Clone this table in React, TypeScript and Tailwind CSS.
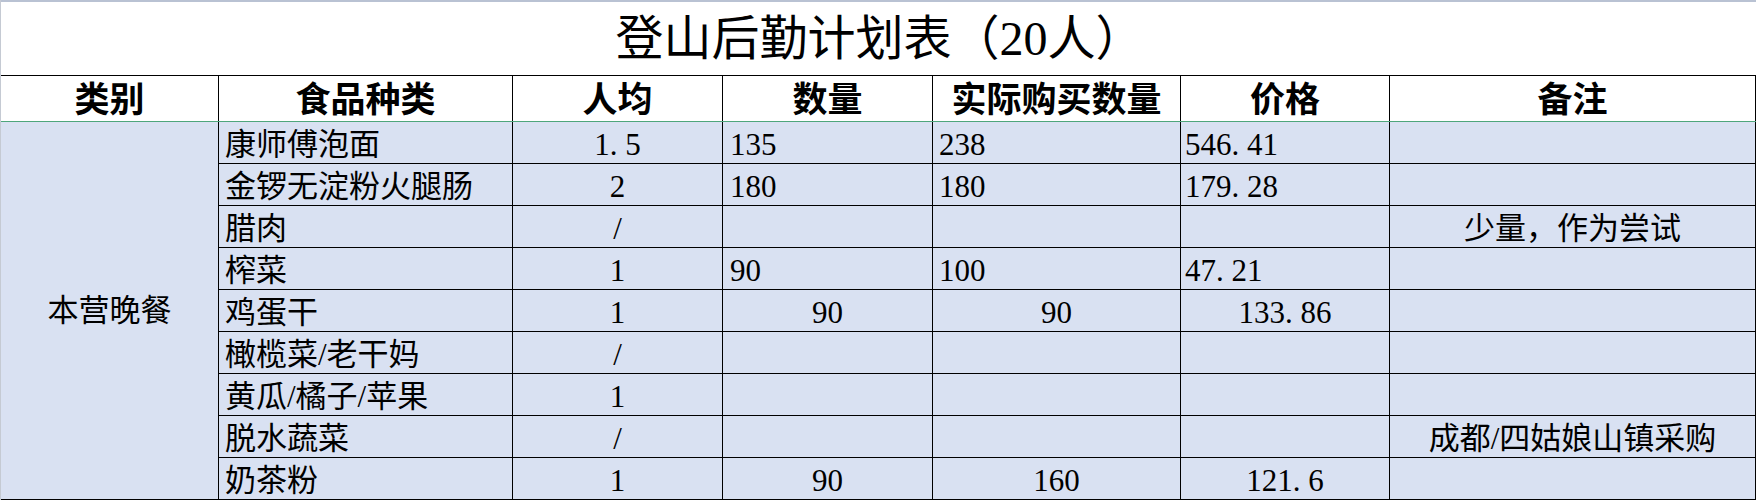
import React from "react";

type Row = {
  name: string;
  per: string;
  qty?: string;
  act?: string;
  price?: string;
  note?: string;
  center?: boolean;
};

const rows: Row[] = [
  { name: "康师傅泡面", per: "1.5", qty: "135", act: "238", price: "546.41" },
  { name: "金锣无淀粉火腿肠", per: "2", qty: "180", act: "180", price: "179.28" },
  { name: "腊肉", per: "/", note: "少量，作为尝试" },
  { name: "榨菜", per: "1", qty: "90", act: "100", price: "47.21" },
  { name: "鸡蛋干", per: "1", qty: "90", act: "90", price: "133.86", center: true },
  { name: "橄榄菜/老干妈", per: "/" },
  { name: "黄瓜/橘子/苹果", per: "1" },
  { name: "脱水蔬菜", per: "/", note: "成都/四姑娘山镇采购" },
  { name: "奶茶粉", per: "1", qty: "90", act: "160", price: "121.6", center: true },
];

function Num({ v }: { v?: string }) {
  if (!v) return null;
  const parts = v.split(".");
  return (
    <span>
      {parts[0]}
      {parts.length > 1 && (
        <>
          <span className="inline-block w-[0.5em]">.</span>
          {parts[1]}
        </>
      )}
    </span>
  );
}

const cellBase =
  "flex items-center border-r border-b border-black bg-[#d9e1f2] whitespace-nowrap";

export default function App() {
  return (
    <div className="w-[1756px] h-[500px] bg-white border-l border-[#c5cad3] font-['Liberation_Serif','Noto_Sans_CJK_SC',serif] text-black overflow-hidden">
      {/* Title */}
      <div className="h-[75px] border-t-2 border-[#b9c2d3] flex items-center justify-center text-[48px] leading-none pl-[2px]">
        <span>登山后勤计划表（20人）</span>
      </div>

      {/* Header */}
      <div className="grid grid-cols-[218px_294px_210px_210px_248px_209px_1fr] h-[47px] border-t border-black border-b border-b-[#4fa67c] text-[35px] font-bold leading-none">
        {["类别", "食品种类", "人均", "数量", "实际购买数量", "价格", "备注"].map((h) => (
          <div key={h} className="flex items-center justify-center border-r border-black pt-[4px]">
            {h}
          </div>
        ))}
      </div>

      {/* Body */}
      <div className="grid grid-cols-[218px_294px_210px_210px_248px_209px_1fr] grid-rows-[repeat(9,42px)] text-[31px] leading-none">
        <div className="row-span-9 flex items-center justify-center border-r border-b border-black bg-[#d9e1f2]">
          本营晚餐
        </div>
        {rows.map((r) => (
          <React.Fragment key={r.name}>
            <div className={`${cellBase} justify-start pl-[6px] pt-[3px]`}>{r.name}</div>
            <div className={`${cellBase} justify-center pt-[3px]`}>
              <Num v={r.per} />
            </div>
            <div className={`${cellBase} pt-[3px] ${r.center ? "justify-center" : "justify-start pl-[7px]"}`}>
              <Num v={r.qty} />
            </div>
            <div className={`${cellBase} pt-[3px] ${r.center ? "justify-center" : "justify-start pl-[6px]"}`}>
              <Num v={r.act} />
            </div>
            <div className={`${cellBase} pt-[3px] ${r.center ? "justify-center" : "justify-start pl-[4px]"}`}>
              <Num v={r.price} />
            </div>
            <div className={`${cellBase} justify-center pt-[3px]`}>{r.note}</div>
          </React.Fragment>
        ))}
      </div>
    </div>
  );
}
